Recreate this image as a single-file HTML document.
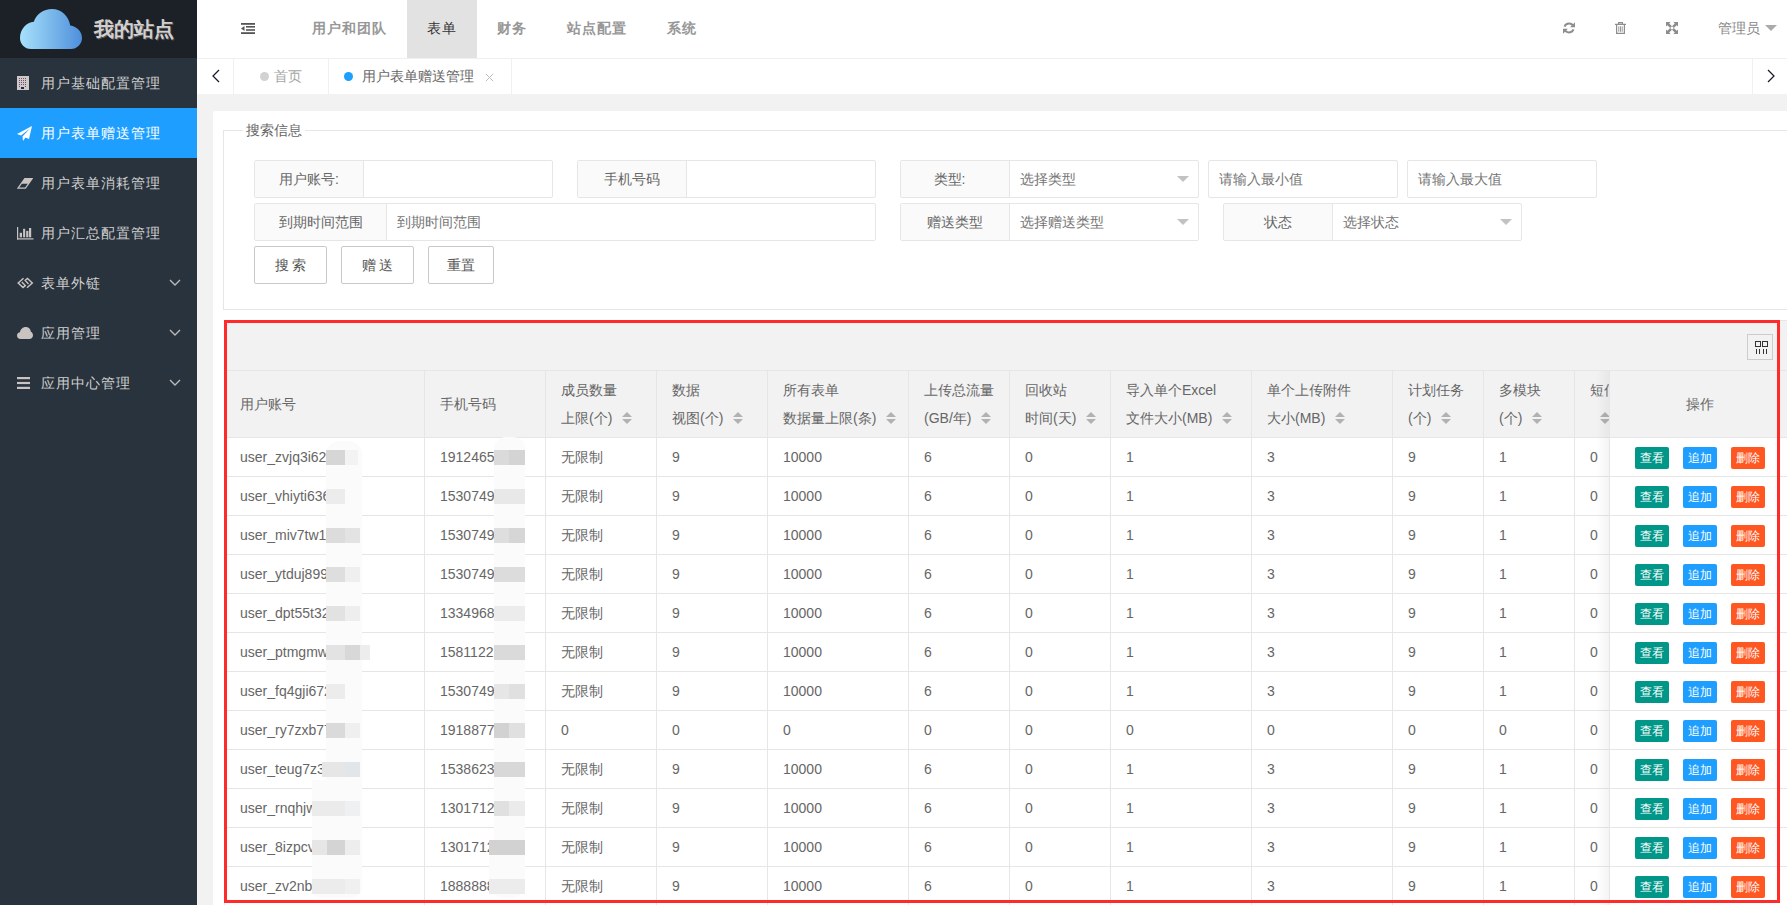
<!DOCTYPE html>
<html><head><meta charset="utf-8">
<style>
*{box-sizing:border-box;margin:0;padding:0}
html,body{width:1787px;height:905px;overflow:hidden}
body{position:relative;background:#f2f2f2;font-family:"Liberation Sans",sans-serif;font-size:14px;color:#666}
.abs{position:absolute}
.side{position:absolute;left:0;top:0;width:197px;height:905px;background:#28333e}
.logo{position:absolute;left:0;top:0;width:197px;height:58px;background:#1c2128}
.logo .t{position:absolute;left:94px;top:15px;font-size:20px;font-weight:bold;color:#d3cfcf;letter-spacing:0;line-height:28px;text-shadow:1px 1px 0 #555}
.menu{position:absolute;left:0;width:197px;height:50px;color:#d2d0ce;font-size:14px;letter-spacing:1px;line-height:50px;white-space:nowrap}
.menu.on{background:#1e9fff;color:#fff}
.menu .tx{position:absolute;left:41px;top:0}
.menu svg{position:absolute}
.menu .chev{position:absolute;left:169px;top:21px}
.header{position:absolute;left:197px;top:0;width:1590px;height:59px;background:#fff;border-bottom:1px solid #f0f0f0}
.nav{position:absolute;top:0;height:58px;line-height:57px;font-size:14px;letter-spacing:1px;color:#979797;font-weight:bold;white-space:nowrap}
.tabs{position:absolute;left:197px;top:59px;width:1590px;height:35px;background:#fff}
.vsep{position:absolute;top:0;width:1px;height:35px;background:#f0f0f0}
.card{position:absolute;left:213px;top:111px;width:1600px;height:800px;background:#fff;border-radius:2px}
.fs{position:absolute;left:223px;top:130px;width:1600px;height:180px;border:1px solid #e6e6e6}
.legend{position:absolute;left:243px;top:121px;padding:0 3px;background:#fff;font-size:14px;color:#666;line-height:18px}
.ig{position:absolute;height:38px;border:1px solid #e6e6e6;border-radius:2px;background:#fff}
.ig .lb{position:absolute;left:0;top:0;height:36px;background:#fafafa;border-right:1px solid #e6e6e6;text-align:center;line-height:36px;color:#666}
.ig .ph{position:absolute;top:0;line-height:36px;color:#757575;white-space:nowrap}
.ig .tri{position:absolute;top:15px;width:0;height:0;border-left:6px solid transparent;border-right:6px solid transparent;border-top:6px solid #c2c2c2}
.btn{position:absolute;top:246px;height:38px;border:1px solid #c9c9c9;border-radius:2px;background:#fff;text-align:center;line-height:36px;color:#555;font-size:14px}
.tbl{position:absolute;left:224px;top:320px;width:1600px;height:600px;background:#fff;border:1px solid #e6e6e6}
.tool{position:absolute;left:224px;top:320px;width:1600px;height:51px;background:#f2f2f2;border-bottom:1px solid #e6e6e6;border-top:1px solid #e6e6e6}
.hrow{position:absolute;left:224px;top:371px;width:1600px;height:67px;background:#f2f2f2;border-bottom:1px solid #e6e6e6}
.hl{position:absolute;width:1px;background:#e6e6e6}
.rl{position:absolute;height:1px;background:#e6e6e6}
.cell{position:absolute;white-space:nowrap;color:#666;font-size:14px}
.sort{position:absolute;width:10px;height:14px}
.sort i{position:absolute;left:0;width:0;height:0;border-left:5px solid transparent;border-right:5px solid transparent}
.sort .up{top:0;border-bottom:5px solid #b2b2b2}
.sort .dn{top:7px;border-top:5px solid #b2b2b2}
.fix{position:absolute;left:1609px;top:371px;width:178px;height:540px;background:#fff;border-left:1px solid #e6e6e6}
.fsh{position:absolute;left:1596px;top:371px;width:13px;height:540px;background:linear-gradient(to right,rgba(0,0,0,0),rgba(0,0,0,.045))}
.xb{position:absolute;width:34px;height:22px;border-radius:2px;color:#fff;font-size:12px;font-weight:500;line-height:22px;text-align:center}
.red{position:absolute;left:224px;top:320px;width:556px;height:583px;border:3px solid #ff2b2b}
.blur{position:absolute;background:#ececec}
</style></head><body>

<div class="side">
<div class="logo">
<svg class="abs" style="left:20px;top:8px" width="63" height="42" viewBox="0 0 63 42">
<defs><linearGradient id="cg" x1="0" y1="0" x2="1" y2="0"><stop offset="0" stop-color="#a7e1fb"/><stop offset="1" stop-color="#4e8fdb"/></linearGradient></defs>
<path d="M11 41 C4.5 41 0 36 0 30 C0 21.5 6.5 14 13.8 13.8 C16.5 5.8 23.5 0.9 32 0.9 C41.5 0.9 48.8 8 50.2 17.4 C57 18.5 62 23.5 62 30 C62 36 57 41 51 41 Z" fill="url(#cg)"/>
</svg>
<div class="t">我的站点</div></div>
<div class="menu" style="top:58px"><svg style="left:17px;top:18px" width="12" height="14" viewBox="0 0 12 14" shape-rendering="crispEdges"><rect x="0" y="0" width="12" height="14" fill="#cfc9c6"/><g fill="#7a4a7d"><rect x="2" y="2" width="1" height="1"/><rect x="4" y="2" width="1" height="1"/><rect x="6" y="2" width="1" height="1"/><rect x="8" y="2" width="1" height="1"/><rect x="2" y="4" width="1" height="1"/><rect x="4" y="4" width="1" height="1"/><rect x="6" y="4" width="1" height="1"/><rect x="8" y="4" width="1" height="1"/><rect x="2" y="6" width="1" height="1"/><rect x="4" y="6" width="1" height="1"/><rect x="6" y="6" width="1" height="1"/><rect x="8" y="6" width="1" height="1"/><rect x="2" y="8" width="1" height="1"/><rect x="4" y="8" width="1" height="1"/><rect x="6" y="8" width="1" height="1"/><rect x="8" y="8" width="1" height="1"/><rect x="2" y="10" width="1" height="1"/><rect x="8" y="10" width="1" height="1"/></g><rect x="4" y="11" width="3" height="2" fill="#1a2a55"/></svg><span class="tx">用户基础配置管理</span></div>
<div class="menu on" style="top:108px"><svg style="left:17px;top:18px" width="15" height="15" viewBox="0 0 15 15"><path d="M15 0 L0 8 L4 9.5 L13 2.5 L5.5 10.5 L6 15 L8.5 11.5 L12 13 Z" fill="#fff"/></svg><span class="tx">用户表单赠送管理</span></div>
<div class="menu" style="top:158px"><svg style="left:17px;top:20px" width="16" height="11" viewBox="0 0 16 11"><path d="M7.8 0.6 H15.2 L8.4 10.2 H1 Z" stroke="#c9c4c2" stroke-width="1.2" fill="none"/><path d="M7.8 0.6 H15.2 L11.6 5.8 H4.2 Z" fill="#c9c4c2"/></svg><span class="tx">用户表单消耗管理</span></div>
<div class="menu" style="top:208px"><svg style="left:17px;top:19px" width="17" height="13" viewBox="0 0 17 13"><rect x="0" y="0" width="1.2" height="12.5" fill="#c9c4c2"/><rect x="0" y="11.3" width="16.5" height="1.2" fill="#c9c4c2"/><rect x="2.7" y="5.8" width="2.3" height="4.5" fill="#c9c4c2"/><rect x="6.1" y="1.8" width="2.1" height="8.5" fill="#c9c4c2"/><rect x="9.2" y="3.9" width="2.2" height="6.4" fill="#c9c4c2"/><rect x="12" y="1" width="2.2" height="9.3" fill="#c9c4c2"/></svg><span class="tx">用户汇总配置管理</span></div>
<div class="menu" style="top:258px"><svg style="left:17px;top:19px" width="17" height="12" viewBox="0 0 17 12"><path d="M6.5 1.3 L1.2 6 L6 10.5 L8.3 8.6 L4.8 5 M10 10.7 L15.3 6 L10.5 1.5 L8.2 3.4 L11.5 6.9" stroke="#c9c4c2" stroke-width="1.45" fill="none"/></svg><span class="tx">表单外链</span><svg class="chev" width="12" height="8" viewBox="0 0 12 8"><path d="M1 1 L6 6 L11 1" stroke="#b9b9b9" stroke-width="1.4" fill="none"/></svg></div>
<div class="menu" style="top:308px"><svg style="left:17px;top:19px" width="16" height="12" viewBox="0 0 16 12"><path d="M3.5 12 C1.5 12 0 10.5 0 8.5 C0 6.7 1.3 5.3 3 5.2 C3.5 2.2 5.8 0 8.7 0 C11.5 0 13.6 2 13.9 4.7 C15.2 5.3 16 6.7 16 8.3 C16 10.4 14.4 12 12.3 12 Z" fill="#c9c4c2"/></svg><span class="tx">应用管理</span><svg class="chev" width="12" height="8" viewBox="0 0 12 8"><path d="M1 1 L6 6 L11 1" stroke="#b9b9b9" stroke-width="1.4" fill="none"/></svg></div>
<div class="menu" style="top:358px"><svg style="left:17px;top:19px" width="13" height="12" viewBox="0 0 13 12"><rect x="0" y="0" width="13" height="2.2" fill="#c9c4c2"/><rect x="0" y="4.9" width="13" height="2.2" fill="#c9c4c2"/><rect x="0" y="9.8" width="13" height="2.2" fill="#c9c4c2"/></svg><span class="tx">应用中心管理</span><svg class="chev" width="12" height="8" viewBox="0 0 12 8"><path d="M1 1 L6 6 L11 1" stroke="#b9b9b9" stroke-width="1.4" fill="none"/></svg></div>
</div>
<div class="header">
<svg class="abs" style="left:44px;top:23px" width="14" height="11" viewBox="0 0 14 11"><rect x="0" y="0" width="14" height="1.8" fill="#555"/><rect x="5" y="3" width="9" height="1.6" fill="#555"/><rect x="5" y="6.2" width="9" height="1.6" fill="#555"/><rect x="0" y="9.2" width="14" height="1.8" fill="#555"/><path d="M0 5.5 L3.5 3 V8 Z" fill="#555"/></svg>
<div class="abs" style="left:210px;top:0;width:70px;height:58px;background:#e2e2e2"></div>
<div class="nav" style="left:115px;">用户和团队</div>
<div class="nav" style="left:230px;color:#333;font-weight:500">表单</div>
<div class="nav" style="left:300px;">财务</div>
<div class="nav" style="left:370px;">站点配置</div>
<div class="nav" style="left:470px;">系统</div>
<svg class="abs" style="left:1366px;top:22px" width="12" height="12" viewBox="0 0 12 12"><path d="M10.3 4.3 A4.8 4.8 0 0 0 1.5 4.6" stroke="#8d8d8d" stroke-width="1.9" fill="none"/><path d="M12 0.3 V5.2 H7.1 Z" fill="#8d8d8d"/><path d="M1.7 7.7 A4.8 4.8 0 0 0 10.5 7.4" stroke="#8d8d8d" stroke-width="1.9" fill="none"/><path d="M0 11.7 V6.8 H4.9 Z" fill="#8d8d8d"/></svg>
<svg class="abs" style="left:1418px;top:22px" width="11" height="12" viewBox="0 0 11 12"><path d="M0 2.4 H11 M3.6 2.4 V0.7 H7.4 V2.4" stroke="#8d8d8d" stroke-width="1.2" fill="none"/><path d="M1.6 2.8 V11.4 H9.4 V2.8" stroke="#8d8d8d" stroke-width="1.2" fill="none"/><path d="M3.8 4.3 V9.8 M5.5 4.3 V9.8 M7.2 4.3 V9.8" stroke="#8d8d8d" stroke-width="0.9" fill="none"/></svg>
<svg class="abs" style="left:1469px;top:22px" width="12" height="12" viewBox="0 0 13 13"><path d="M0 0 H5 L3.5 1.5 L6.5 4.5 L4.5 6.5 L1.5 3.5 L0 5 Z M13 0 V5 L11.5 3.5 L8.5 6.5 L6.5 4.5 L9.5 1.5 L8 0 Z M13 13 H8 L9.5 11.5 L6.5 8.5 L8.5 6.5 L11.5 9.5 L13 8 Z M0 13 V8 L1.5 9.5 L4.5 6.5 L6.5 8.5 L3.5 11.5 L5 13 Z" fill="#8d8d8d"/></svg>
<div class="nav" style="left:1521px;color:#888;letter-spacing:0;font-weight:normal">管理员</div>
<div class="abs" style="left:1568px;top:25px;width:0;height:0;border-left:6px solid transparent;border-right:6px solid transparent;border-top:6px solid #aaa"></div>

</div>
<div class="tabs">
<svg class="abs" style="left:15px;top:10px" width="8" height="14" viewBox="0 0 8 14"><path d="M7 1 L1 7 L7 13" stroke="#1a1a2a" stroke-width="1.25" fill="none"/></svg>
<div class="vsep" style="left:36px"></div>
<div class="abs" style="left:63px;top:13px;width:9px;height:9px;border-radius:50%;background:#d2d2d2"></div>
<div class="abs" style="left:77px;top:0;line-height:34px;color:#a5a5a5">首页</div>
<div class="vsep" style="left:131px"></div>
<div class="abs" style="left:147px;top:13px;width:9px;height:9px;border-radius:50%;background:#1e9fff"></div>
<div class="abs" style="left:165px;top:0;line-height:34px;color:#666">用户表单赠送管理</div>
<svg class="abs" style="left:288px;top:14px" width="9" height="9" viewBox="0 0 9 9"><path d="M0.8 0.8 L8.2 8.2 M8.2 0.8 L0.8 8.2" stroke="#bdbdbd" stroke-width="1"/></svg>
<div class="vsep" style="left:314px"></div>
<div class="vsep" style="left:1555px"></div>
<svg class="abs" style="left:1570px;top:10px" width="8" height="14" viewBox="0 0 8 14"><path d="M1 1 L7 7 L1 13" stroke="#1a1a2a" stroke-width="1.25" fill="none"/></svg>
</div>
<div class="card"></div>
<div class="fs"></div>
<div class="legend">搜索信息</div>
<div class="ig" style="left:254px;top:160px;width:299px"><div class="lb" style="width:109px">用户账号:</div></div>
<div class="ig" style="left:577px;top:160px;width:299px"><div class="lb" style="width:109px">手机号码</div></div>
<div class="ig" style="left:900px;top:160px;width:299px"><div class="lb" style="width:109px"><span style="padding-right:11px">类型:</span></div><div class="ph" style="left:119px">选择类型</div><div class="tri" style="left:276px"></div></div>
<div class="ig" style="left:1208px;top:160px;width:190px"><div class="ph" style="left:10px">请输入最小值</div></div>
<div class="ig" style="left:1407px;top:160px;width:190px"><div class="ph" style="left:10px">请输入最大值</div></div>
<div class="ig" style="left:254px;top:203px;width:622px"><div class="lb" style="width:132px">到期时间范围</div><div class="ph" style="left:142px">到期时间范围</div></div>
<div class="ig" style="left:900px;top:203px;width:299px"><div class="lb" style="width:109px">赠送类型</div><div class="ph" style="left:119px">选择赠送类型</div><div class="tri" style="left:276px"></div></div>
<div class="ig" style="left:1223px;top:203px;width:299px"><div class="lb" style="width:109px">状态</div><div class="ph" style="left:119px">选择状态</div><div class="tri" style="left:276px"></div></div>
<div class="btn" style="left:254px;width:73px">搜 索</div>
<div class="btn" style="left:341px;width:73px">赠 送</div>
<div class="btn" style="left:428px;width:66px">重置</div>
<div class="tbl"></div>
<div class="tool"></div>
<div class="abs" style="left:1747px;top:334px;width:26px;height:26px;border:1px solid #ccc"></div>
<svg class="abs" style="left:1755px;top:341px" width="13" height="13" viewBox="0 0 13 13"><rect x="0.5" y="0.5" width="5" height="5" stroke="#333" fill="none"/><rect x="7.5" y="0.5" width="5" height="5" stroke="#333" fill="none"/><path d="M1.5 8 V13 M4.5 8 V13 M8.5 8 V13 M11.5 8 V13" stroke="#333"/></svg>
<div class="hrow"></div>
<div class="hl" style="left:424px;top:371px;height:540px"></div>
<div class="hl" style="left:545px;top:371px;height:540px"></div>
<div class="hl" style="left:656px;top:371px;height:540px"></div>
<div class="hl" style="left:767px;top:371px;height:540px"></div>
<div class="hl" style="left:908px;top:371px;height:540px"></div>
<div class="hl" style="left:1009px;top:371px;height:540px"></div>
<div class="hl" style="left:1110px;top:371px;height:540px"></div>
<div class="hl" style="left:1251px;top:371px;height:540px"></div>
<div class="hl" style="left:1392px;top:371px;height:540px"></div>
<div class="hl" style="left:1483px;top:371px;height:540px"></div>
<div class="hl" style="left:1574px;top:371px;height:540px"></div>
<div class="rl" style="left:224px;top:476px;width:1600px"></div>
<div class="rl" style="left:224px;top:515px;width:1600px"></div>
<div class="rl" style="left:224px;top:554px;width:1600px"></div>
<div class="rl" style="left:224px;top:593px;width:1600px"></div>
<div class="rl" style="left:224px;top:632px;width:1600px"></div>
<div class="rl" style="left:224px;top:671px;width:1600px"></div>
<div class="rl" style="left:224px;top:710px;width:1600px"></div>
<div class="rl" style="left:224px;top:749px;width:1600px"></div>
<div class="rl" style="left:224px;top:788px;width:1600px"></div>
<div class="rl" style="left:224px;top:827px;width:1600px"></div>
<div class="rl" style="left:224px;top:866px;width:1600px"></div>
<div class="rl" style="left:224px;top:905px;width:1600px"></div>
<div class="rl" style="left:224px;top:944px;width:1600px"></div>
<div class="cell" style="left:240px;top:394px;line-height:20px">用户账号</div>
<div class="cell" style="left:440px;top:394px;line-height:20px">手机号码</div>
<div class="cell" style="left:561px;top:380px;line-height:20px">成员数量</div>
<div class="cell" style="left:561px;top:408px;line-height:20px">上限(个)<span class="sort" style="position:relative;display:inline-block;vertical-align:middle;margin-left:10px"><i class="up"></i><i class="dn"></i></span></div>
<div class="cell" style="left:672px;top:380px;line-height:20px">数据</div>
<div class="cell" style="left:672px;top:408px;line-height:20px">视图(个)<span class="sort" style="position:relative;display:inline-block;vertical-align:middle;margin-left:10px"><i class="up"></i><i class="dn"></i></span></div>
<div class="cell" style="left:783px;top:380px;line-height:20px">所有表单</div>
<div class="cell" style="left:783px;top:408px;line-height:20px">数据量上限(条)<span class="sort" style="position:relative;display:inline-block;vertical-align:middle;margin-left:10px"><i class="up"></i><i class="dn"></i></span></div>
<div class="cell" style="left:924px;top:380px;line-height:20px">上传总流量</div>
<div class="cell" style="left:924px;top:408px;line-height:20px">(GB/年)<span class="sort" style="position:relative;display:inline-block;vertical-align:middle;margin-left:10px"><i class="up"></i><i class="dn"></i></span></div>
<div class="cell" style="left:1025px;top:380px;line-height:20px">回收站</div>
<div class="cell" style="left:1025px;top:408px;line-height:20px">时间(天)<span class="sort" style="position:relative;display:inline-block;vertical-align:middle;margin-left:10px"><i class="up"></i><i class="dn"></i></span></div>
<div class="cell" style="left:1126px;top:380px;line-height:20px">导入单个Excel</div>
<div class="cell" style="left:1126px;top:408px;line-height:20px">文件大小(MB)<span class="sort" style="position:relative;display:inline-block;vertical-align:middle;margin-left:10px"><i class="up"></i><i class="dn"></i></span></div>
<div class="cell" style="left:1267px;top:380px;line-height:20px">单个上传附件</div>
<div class="cell" style="left:1267px;top:408px;line-height:20px">大小(MB)<span class="sort" style="position:relative;display:inline-block;vertical-align:middle;margin-left:10px"><i class="up"></i><i class="dn"></i></span></div>
<div class="cell" style="left:1408px;top:380px;line-height:20px">计划任务</div>
<div class="cell" style="left:1408px;top:408px;line-height:20px">(个)<span class="sort" style="position:relative;display:inline-block;vertical-align:middle;margin-left:10px"><i class="up"></i><i class="dn"></i></span></div>
<div class="cell" style="left:1499px;top:380px;line-height:20px">多模块</div>
<div class="cell" style="left:1499px;top:408px;line-height:20px">(个)<span class="sort" style="position:relative;display:inline-block;vertical-align:middle;margin-left:10px"><i class="up"></i><i class="dn"></i></span></div>
<div class="cell" style="left:1590px;top:380px;line-height:20px">短信</div>
<div class="cell" style="left:1590px;top:408px;line-height:20px"><span class="sort" style="position:relative;display:inline-block;vertical-align:middle;margin-left:10px"><i class="up"></i><i class="dn"></i></span></div>
<div class="cell" style="left:240px;top:447px;line-height:20px">user_zvjq3i62</div>
<div class="cell" style="left:440px;top:447px;line-height:20px">1912465</div>
<div class="cell" style="left:561px;top:447px;line-height:20px">无限制</div>
<div class="cell" style="left:672px;top:447px;line-height:20px">9</div>
<div class="cell" style="left:783px;top:447px;line-height:20px">10000</div>
<div class="cell" style="left:924px;top:447px;line-height:20px">6</div>
<div class="cell" style="left:1025px;top:447px;line-height:20px">0</div>
<div class="cell" style="left:1126px;top:447px;line-height:20px">1</div>
<div class="cell" style="left:1267px;top:447px;line-height:20px">3</div>
<div class="cell" style="left:1408px;top:447px;line-height:20px">9</div>
<div class="cell" style="left:1499px;top:447px;line-height:20px">1</div>
<div class="cell" style="left:1590px;top:447px;line-height:20px">0</div>
<div class="cell" style="left:240px;top:486px;line-height:20px">user_vhiyti636</div>
<div class="cell" style="left:440px;top:486px;line-height:20px">1530749</div>
<div class="cell" style="left:561px;top:486px;line-height:20px">无限制</div>
<div class="cell" style="left:672px;top:486px;line-height:20px">9</div>
<div class="cell" style="left:783px;top:486px;line-height:20px">10000</div>
<div class="cell" style="left:924px;top:486px;line-height:20px">6</div>
<div class="cell" style="left:1025px;top:486px;line-height:20px">0</div>
<div class="cell" style="left:1126px;top:486px;line-height:20px">1</div>
<div class="cell" style="left:1267px;top:486px;line-height:20px">3</div>
<div class="cell" style="left:1408px;top:486px;line-height:20px">9</div>
<div class="cell" style="left:1499px;top:486px;line-height:20px">1</div>
<div class="cell" style="left:1590px;top:486px;line-height:20px">0</div>
<div class="cell" style="left:240px;top:525px;line-height:20px">user_miv7tw1</div>
<div class="cell" style="left:440px;top:525px;line-height:20px">1530749</div>
<div class="cell" style="left:561px;top:525px;line-height:20px">无限制</div>
<div class="cell" style="left:672px;top:525px;line-height:20px">9</div>
<div class="cell" style="left:783px;top:525px;line-height:20px">10000</div>
<div class="cell" style="left:924px;top:525px;line-height:20px">6</div>
<div class="cell" style="left:1025px;top:525px;line-height:20px">0</div>
<div class="cell" style="left:1126px;top:525px;line-height:20px">1</div>
<div class="cell" style="left:1267px;top:525px;line-height:20px">3</div>
<div class="cell" style="left:1408px;top:525px;line-height:20px">9</div>
<div class="cell" style="left:1499px;top:525px;line-height:20px">1</div>
<div class="cell" style="left:1590px;top:525px;line-height:20px">0</div>
<div class="cell" style="left:240px;top:564px;line-height:20px">user_ytduj899</div>
<div class="cell" style="left:440px;top:564px;line-height:20px">1530749</div>
<div class="cell" style="left:561px;top:564px;line-height:20px">无限制</div>
<div class="cell" style="left:672px;top:564px;line-height:20px">9</div>
<div class="cell" style="left:783px;top:564px;line-height:20px">10000</div>
<div class="cell" style="left:924px;top:564px;line-height:20px">6</div>
<div class="cell" style="left:1025px;top:564px;line-height:20px">0</div>
<div class="cell" style="left:1126px;top:564px;line-height:20px">1</div>
<div class="cell" style="left:1267px;top:564px;line-height:20px">3</div>
<div class="cell" style="left:1408px;top:564px;line-height:20px">9</div>
<div class="cell" style="left:1499px;top:564px;line-height:20px">1</div>
<div class="cell" style="left:1590px;top:564px;line-height:20px">0</div>
<div class="cell" style="left:240px;top:603px;line-height:20px">user_dpt55t32</div>
<div class="cell" style="left:440px;top:603px;line-height:20px">1334968</div>
<div class="cell" style="left:561px;top:603px;line-height:20px">无限制</div>
<div class="cell" style="left:672px;top:603px;line-height:20px">9</div>
<div class="cell" style="left:783px;top:603px;line-height:20px">10000</div>
<div class="cell" style="left:924px;top:603px;line-height:20px">6</div>
<div class="cell" style="left:1025px;top:603px;line-height:20px">0</div>
<div class="cell" style="left:1126px;top:603px;line-height:20px">1</div>
<div class="cell" style="left:1267px;top:603px;line-height:20px">3</div>
<div class="cell" style="left:1408px;top:603px;line-height:20px">9</div>
<div class="cell" style="left:1499px;top:603px;line-height:20px">1</div>
<div class="cell" style="left:1590px;top:603px;line-height:20px">0</div>
<div class="cell" style="left:240px;top:642px;line-height:20px">user_ptmgmw</div>
<div class="cell" style="left:440px;top:642px;line-height:20px">1581122</div>
<div class="cell" style="left:561px;top:642px;line-height:20px">无限制</div>
<div class="cell" style="left:672px;top:642px;line-height:20px">9</div>
<div class="cell" style="left:783px;top:642px;line-height:20px">10000</div>
<div class="cell" style="left:924px;top:642px;line-height:20px">6</div>
<div class="cell" style="left:1025px;top:642px;line-height:20px">0</div>
<div class="cell" style="left:1126px;top:642px;line-height:20px">1</div>
<div class="cell" style="left:1267px;top:642px;line-height:20px">3</div>
<div class="cell" style="left:1408px;top:642px;line-height:20px">9</div>
<div class="cell" style="left:1499px;top:642px;line-height:20px">1</div>
<div class="cell" style="left:1590px;top:642px;line-height:20px">0</div>
<div class="cell" style="left:240px;top:681px;line-height:20px">user_fq4gji672</div>
<div class="cell" style="left:440px;top:681px;line-height:20px">1530749</div>
<div class="cell" style="left:561px;top:681px;line-height:20px">无限制</div>
<div class="cell" style="left:672px;top:681px;line-height:20px">9</div>
<div class="cell" style="left:783px;top:681px;line-height:20px">10000</div>
<div class="cell" style="left:924px;top:681px;line-height:20px">6</div>
<div class="cell" style="left:1025px;top:681px;line-height:20px">0</div>
<div class="cell" style="left:1126px;top:681px;line-height:20px">1</div>
<div class="cell" style="left:1267px;top:681px;line-height:20px">3</div>
<div class="cell" style="left:1408px;top:681px;line-height:20px">9</div>
<div class="cell" style="left:1499px;top:681px;line-height:20px">1</div>
<div class="cell" style="left:1590px;top:681px;line-height:20px">0</div>
<div class="cell" style="left:240px;top:720px;line-height:20px">user_ry7zxb77</div>
<div class="cell" style="left:440px;top:720px;line-height:20px">1918877</div>
<div class="cell" style="left:561px;top:720px;line-height:20px">0</div>
<div class="cell" style="left:672px;top:720px;line-height:20px">0</div>
<div class="cell" style="left:783px;top:720px;line-height:20px">0</div>
<div class="cell" style="left:924px;top:720px;line-height:20px">0</div>
<div class="cell" style="left:1025px;top:720px;line-height:20px">0</div>
<div class="cell" style="left:1126px;top:720px;line-height:20px">0</div>
<div class="cell" style="left:1267px;top:720px;line-height:20px">0</div>
<div class="cell" style="left:1408px;top:720px;line-height:20px">0</div>
<div class="cell" style="left:1499px;top:720px;line-height:20px">0</div>
<div class="cell" style="left:1590px;top:720px;line-height:20px">0</div>
<div class="cell" style="left:240px;top:759px;line-height:20px">user_teug7z3</div>
<div class="cell" style="left:440px;top:759px;line-height:20px">1538623</div>
<div class="cell" style="left:561px;top:759px;line-height:20px">无限制</div>
<div class="cell" style="left:672px;top:759px;line-height:20px">9</div>
<div class="cell" style="left:783px;top:759px;line-height:20px">10000</div>
<div class="cell" style="left:924px;top:759px;line-height:20px">6</div>
<div class="cell" style="left:1025px;top:759px;line-height:20px">0</div>
<div class="cell" style="left:1126px;top:759px;line-height:20px">1</div>
<div class="cell" style="left:1267px;top:759px;line-height:20px">3</div>
<div class="cell" style="left:1408px;top:759px;line-height:20px">9</div>
<div class="cell" style="left:1499px;top:759px;line-height:20px">1</div>
<div class="cell" style="left:1590px;top:759px;line-height:20px">0</div>
<div class="cell" style="left:240px;top:798px;line-height:20px">user_rnqhjw</div>
<div class="cell" style="left:440px;top:798px;line-height:20px">1301712</div>
<div class="cell" style="left:561px;top:798px;line-height:20px">无限制</div>
<div class="cell" style="left:672px;top:798px;line-height:20px">9</div>
<div class="cell" style="left:783px;top:798px;line-height:20px">10000</div>
<div class="cell" style="left:924px;top:798px;line-height:20px">6</div>
<div class="cell" style="left:1025px;top:798px;line-height:20px">0</div>
<div class="cell" style="left:1126px;top:798px;line-height:20px">1</div>
<div class="cell" style="left:1267px;top:798px;line-height:20px">3</div>
<div class="cell" style="left:1408px;top:798px;line-height:20px">9</div>
<div class="cell" style="left:1499px;top:798px;line-height:20px">1</div>
<div class="cell" style="left:1590px;top:798px;line-height:20px">0</div>
<div class="cell" style="left:240px;top:837px;line-height:20px">user_8izpcv</div>
<div class="cell" style="left:440px;top:837px;line-height:20px">1301712</div>
<div class="cell" style="left:561px;top:837px;line-height:20px">无限制</div>
<div class="cell" style="left:672px;top:837px;line-height:20px">9</div>
<div class="cell" style="left:783px;top:837px;line-height:20px">10000</div>
<div class="cell" style="left:924px;top:837px;line-height:20px">6</div>
<div class="cell" style="left:1025px;top:837px;line-height:20px">0</div>
<div class="cell" style="left:1126px;top:837px;line-height:20px">1</div>
<div class="cell" style="left:1267px;top:837px;line-height:20px">3</div>
<div class="cell" style="left:1408px;top:837px;line-height:20px">9</div>
<div class="cell" style="left:1499px;top:837px;line-height:20px">1</div>
<div class="cell" style="left:1590px;top:837px;line-height:20px">0</div>
<div class="cell" style="left:240px;top:876px;line-height:20px">user_zv2nbj</div>
<div class="cell" style="left:440px;top:876px;line-height:20px">1888888</div>
<div class="cell" style="left:561px;top:876px;line-height:20px">无限制</div>
<div class="cell" style="left:672px;top:876px;line-height:20px">9</div>
<div class="cell" style="left:783px;top:876px;line-height:20px">10000</div>
<div class="cell" style="left:924px;top:876px;line-height:20px">6</div>
<div class="cell" style="left:1025px;top:876px;line-height:20px">0</div>
<div class="cell" style="left:1126px;top:876px;line-height:20px">1</div>
<div class="cell" style="left:1267px;top:876px;line-height:20px">3</div>
<div class="cell" style="left:1408px;top:876px;line-height:20px">9</div>
<div class="cell" style="left:1499px;top:876px;line-height:20px">1</div>
<div class="cell" style="left:1590px;top:876px;line-height:20px">0</div>
<div class="blur" style="left:326px;top:441px;width:36px;height:342px;background:#fbfbfb;border-radius:14px 14px 0 0"></div>
<div class="blur" style="left:312px;top:780px;width:50px;height:118px;background:#fbfbfb;border-radius:0 0 10px 10px"></div>
<div class="blur" style="left:494px;top:437px;width:31px;height:420px;background:#fbfbfb;border-radius:12px 12px 0 0"></div>
<div class="blur" style="left:489px;top:855px;width:36px;height:43px;background:#fbfbfb;border-radius:0 0 14px 14px"></div>
<div class="blur" style="left:326px;top:450px;width:19px;height:15px;background:#d6d6d6"></div>
<div class="blur" style="left:345px;top:450px;width:13px;height:15px;background:#f3f3f3"></div>
<div class="blur" style="left:494px;top:450px;width:15px;height:15px;background:#dadada"></div>
<div class="blur" style="left:509px;top:450px;width:16px;height:15px;background:#d4d4d4"></div>
<div class="blur" style="left:326px;top:489px;width:19px;height:15px;background:#ececec"></div>
<div class="blur" style="left:494px;top:489px;width:31px;height:15px;background:#e8e8e8"></div>
<div class="blur" style="left:326px;top:528px;width:19px;height:15px;background:#dcdcdc"></div>
<div class="blur" style="left:345px;top:528px;width:15px;height:15px;background:#e3e3e3"></div>
<div class="blur" style="left:494px;top:528px;width:15px;height:15px;background:#dedede"></div>
<div class="blur" style="left:509px;top:528px;width:16px;height:15px;background:#d6d6d6"></div>
<div class="blur" style="left:326px;top:567px;width:19px;height:15px;background:#dedede"></div>
<div class="blur" style="left:345px;top:567px;width:15px;height:15px;background:#efefef"></div>
<div class="blur" style="left:494px;top:567px;width:31px;height:15px;background:#dcdcdc"></div>
<div class="blur" style="left:326px;top:606px;width:19px;height:15px;background:#e2e2e2"></div>
<div class="blur" style="left:345px;top:606px;width:15px;height:15px;background:#eeeeee"></div>
<div class="blur" style="left:494px;top:606px;width:31px;height:15px;background:#ececec"></div>
<div class="blur" style="left:326px;top:645px;width:19px;height:15px;background:#e3e3e3"></div>
<div class="blur" style="left:345px;top:645px;width:15px;height:15px;background:#d8d8d8"></div>
<div class="blur" style="left:360px;top:645px;width:10px;height:15px;background:#ededed"></div>
<div class="blur" style="left:494px;top:645px;width:31px;height:15px;background:#dadada"></div>
<div class="blur" style="left:326px;top:684px;width:19px;height:15px;background:#ececec"></div>
<div class="blur" style="left:494px;top:684px;width:15px;height:15px;background:#e6e6e6"></div>
<div class="blur" style="left:509px;top:684px;width:16px;height:15px;background:#e0e0e0"></div>
<div class="blur" style="left:326px;top:723px;width:19px;height:15px;background:#dadada"></div>
<div class="blur" style="left:345px;top:723px;width:15px;height:15px;background:#efefef"></div>
<div class="blur" style="left:494px;top:723px;width:15px;height:15px;background:#d2d2d2"></div>
<div class="blur" style="left:509px;top:723px;width:16px;height:15px;background:#e0e0e0"></div>
<div class="blur" style="left:322px;top:762px;width:23px;height:15px;background:#e6e6e6"></div>
<div class="blur" style="left:345px;top:762px;width:15px;height:15px;background:#e3e6e9"></div>
<div class="blur" style="left:494px;top:762px;width:31px;height:15px;background:#d8d8d8"></div>
<div class="blur" style="left:312px;top:801px;width:33px;height:15px;background:#ebebeb"></div>
<div class="blur" style="left:345px;top:801px;width:15px;height:15px;background:#eef0f2"></div>
<div class="blur" style="left:494px;top:801px;width:15px;height:15px;background:#e0e0e0"></div>
<div class="blur" style="left:509px;top:801px;width:16px;height:15px;background:#ebebeb"></div>
<div class="blur" style="left:312px;top:840px;width:15px;height:15px;background:#e6e6e6"></div>
<div class="blur" style="left:327px;top:840px;width:18px;height:15px;background:#d4d4d4"></div>
<div class="blur" style="left:345px;top:840px;width:15px;height:15px;background:#ededed"></div>
<div class="blur" style="left:489px;top:840px;width:36px;height:15px;background:#d2d2d2"></div>
<div class="blur" style="left:312px;top:879px;width:33px;height:15px;background:#ececec"></div>
<div class="blur" style="left:345px;top:879px;width:15px;height:15px;background:#f0f0f0"></div>
<div class="blur" style="left:489px;top:879px;width:36px;height:15px;background:#ececec"></div>
<div class="fsh"></div>
<div class="fix"></div>
<div class="abs" style="left:1610px;top:371px;width:177px;height:67px;background:#f2f2f2;border-bottom:1px solid #e6e6e6"></div>
<div class="cell" style="left:1686px;top:394px;line-height:20px">操作</div>
<div class="rl" style="left:1610px;top:476px;width:177px"></div>
<div class="rl" style="left:1610px;top:515px;width:177px"></div>
<div class="rl" style="left:1610px;top:554px;width:177px"></div>
<div class="rl" style="left:1610px;top:593px;width:177px"></div>
<div class="rl" style="left:1610px;top:632px;width:177px"></div>
<div class="rl" style="left:1610px;top:671px;width:177px"></div>
<div class="rl" style="left:1610px;top:710px;width:177px"></div>
<div class="rl" style="left:1610px;top:749px;width:177px"></div>
<div class="rl" style="left:1610px;top:788px;width:177px"></div>
<div class="rl" style="left:1610px;top:827px;width:177px"></div>
<div class="rl" style="left:1610px;top:866px;width:177px"></div>
<div class="rl" style="left:1610px;top:905px;width:177px"></div>
<div class="rl" style="left:1610px;top:944px;width:177px"></div>
<div class="xb" style="left:1635px;top:447px;background:#009688">查看</div>
<div class="xb" style="left:1683px;top:447px;background:#1e9fff">追加</div>
<div class="xb" style="left:1731px;top:447px;background:#ff5722">删除</div>
<div class="xb" style="left:1635px;top:486px;background:#009688">查看</div>
<div class="xb" style="left:1683px;top:486px;background:#1e9fff">追加</div>
<div class="xb" style="left:1731px;top:486px;background:#ff5722">删除</div>
<div class="xb" style="left:1635px;top:525px;background:#009688">查看</div>
<div class="xb" style="left:1683px;top:525px;background:#1e9fff">追加</div>
<div class="xb" style="left:1731px;top:525px;background:#ff5722">删除</div>
<div class="xb" style="left:1635px;top:564px;background:#009688">查看</div>
<div class="xb" style="left:1683px;top:564px;background:#1e9fff">追加</div>
<div class="xb" style="left:1731px;top:564px;background:#ff5722">删除</div>
<div class="xb" style="left:1635px;top:603px;background:#009688">查看</div>
<div class="xb" style="left:1683px;top:603px;background:#1e9fff">追加</div>
<div class="xb" style="left:1731px;top:603px;background:#ff5722">删除</div>
<div class="xb" style="left:1635px;top:642px;background:#009688">查看</div>
<div class="xb" style="left:1683px;top:642px;background:#1e9fff">追加</div>
<div class="xb" style="left:1731px;top:642px;background:#ff5722">删除</div>
<div class="xb" style="left:1635px;top:681px;background:#009688">查看</div>
<div class="xb" style="left:1683px;top:681px;background:#1e9fff">追加</div>
<div class="xb" style="left:1731px;top:681px;background:#ff5722">删除</div>
<div class="xb" style="left:1635px;top:720px;background:#009688">查看</div>
<div class="xb" style="left:1683px;top:720px;background:#1e9fff">追加</div>
<div class="xb" style="left:1731px;top:720px;background:#ff5722">删除</div>
<div class="xb" style="left:1635px;top:759px;background:#009688">查看</div>
<div class="xb" style="left:1683px;top:759px;background:#1e9fff">追加</div>
<div class="xb" style="left:1731px;top:759px;background:#ff5722">删除</div>
<div class="xb" style="left:1635px;top:798px;background:#009688">查看</div>
<div class="xb" style="left:1683px;top:798px;background:#1e9fff">追加</div>
<div class="xb" style="left:1731px;top:798px;background:#ff5722">删除</div>
<div class="xb" style="left:1635px;top:837px;background:#009688">查看</div>
<div class="xb" style="left:1683px;top:837px;background:#1e9fff">追加</div>
<div class="xb" style="left:1731px;top:837px;background:#ff5722">删除</div>
<div class="xb" style="left:1635px;top:876px;background:#009688">查看</div>
<div class="xb" style="left:1683px;top:876px;background:#1e9fff">追加</div>
<div class="xb" style="left:1731px;top:876px;background:#ff5722">删除</div>
<div class="red" style="width:1556px"></div>
</body></html>
